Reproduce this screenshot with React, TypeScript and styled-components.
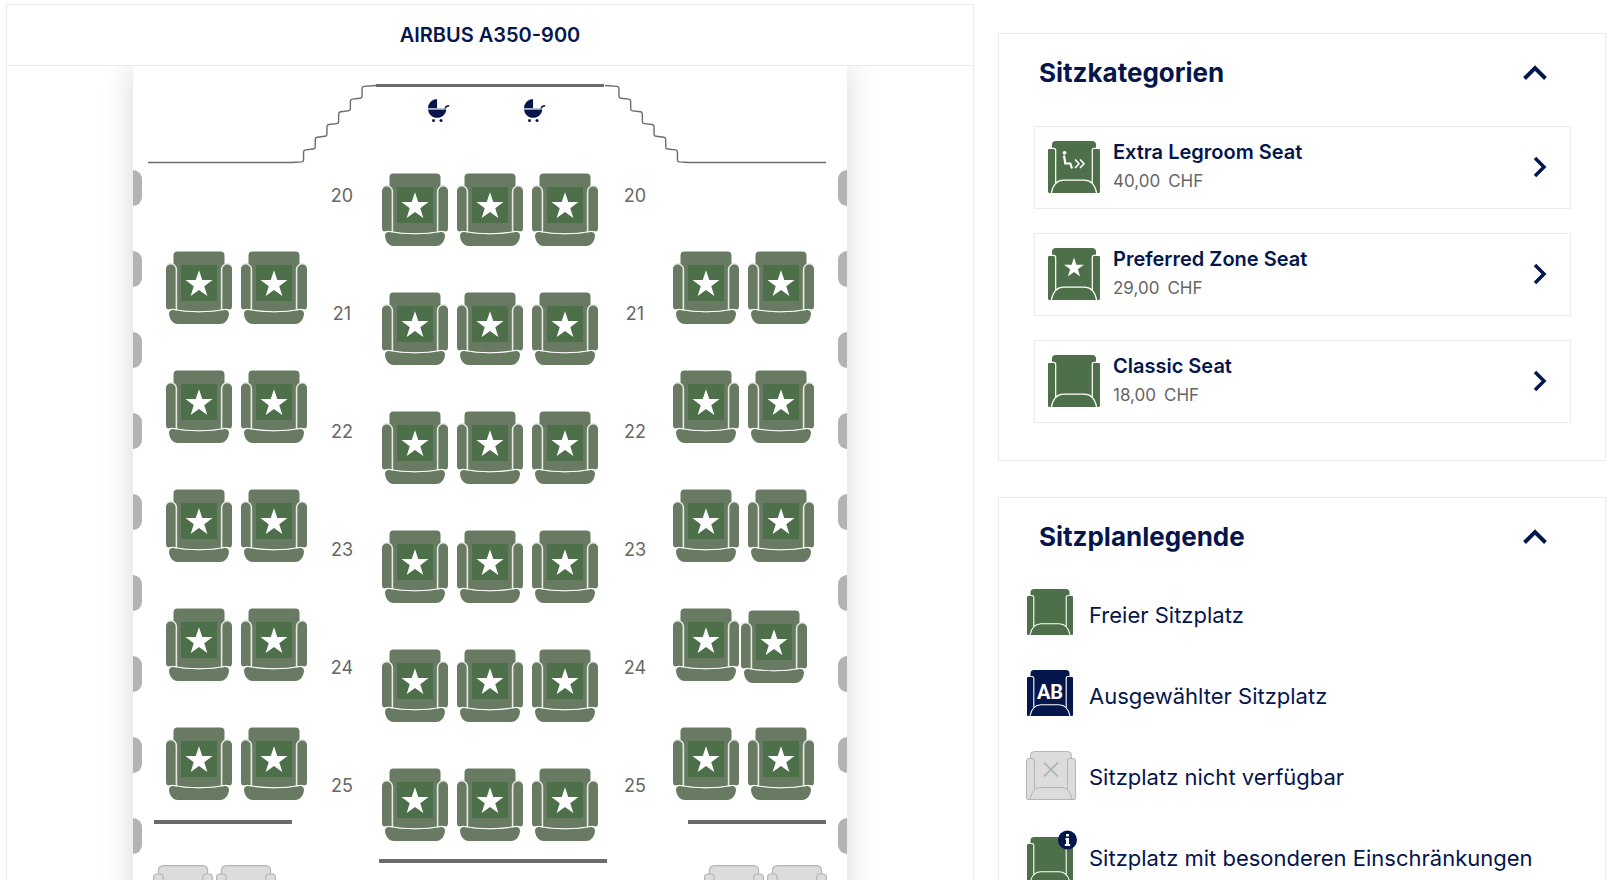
import React from "react";
import styled, { createGlobalStyle } from "styled-components";

const color = {
  navy: "#05164d",
  seat: "#687a62",
  seatCore: "#4d6f49",
  line: "#ebebeb",
  text: "#666666",
  wall: "#6b6b6b",
  window: "#b2b4b2",
  mutedFill: "#dcdcda",
  mutedLine: "#b0b8b4",
};

const GlobalStyle = createGlobalStyle`
  *, *::before, *::after { box-sizing: border-box; }
  body {
    margin: 0;
    background: #fff;
    color: ${color.navy};
    font-family: Inter, Roboto, "Liberation Sans", sans-serif;
  }
  button { font: inherit; color: inherit; border: 0; padding: 0; background: none; cursor: pointer; }
  h1, h2, p, ul { margin: 0; padding: 0; }
  svg { display: block; }
`;

const Page = styled.main`
  display: grid;
  grid-template-columns: minmax(0, 968fr) minmax(0, 608fr);
  gap: 24px;
  height: 100vh;
  padding: 4px 4px 0 6px;
  overflow: hidden;
`;

const CabinPanel = styled.section`
  border: 1px solid ${color.line};
  border-bottom: 0;
  overflow: hidden;
`;

const CabinHeader = styled.header`
  display: flex;
  align-items: center;
  justify-content: center;
  height: 61px;
  padding-bottom: 1px;
  border-bottom: 1px solid ${color.line};
`;

const AircraftName = styled.h1`
  font-size: 20px;
  line-height: 24px;
  font-weight: 600;
`;

const CabinView = styled.div`
  overflow: hidden;
  display: flex;
  justify-content: center;
`;

const Fuselage = styled.div`
  flex: none;
  width: 714px;
  background: #fff;
  box-shadow: 0 0 30px rgba(0, 0, 0, 0.16);
`;

const BulkheadArt = styled.svg`
  margin: 0 15px;
`;

const SeatGrid = styled.div`
  display: grid;
  grid-template-columns: 9px 165px 70px 230px 56px 175px 9px;
  align-items: start;
`;

const WindowStrip = styled.div<{ $side: "left" | "right" }>`
  display: grid;
  gap: 45px;
  & > span {
    height: 36px;
    background: ${color.window};
    border-radius: ${(p) => (p.$side === "left" ? "0 9px 9px 0" : "9px 0 0 9px")};
  }
`;

const SeatBlock = styled.div<{ $top: number; $left: number }>`
  display: flex;
  flex-direction: column;
  gap: 46px;
  padding: ${(p) => p.$top}px 0 0 ${(p) => p.$left}px;
`;

const SeatRow = styled.div`
  display: flex;
  gap: 9px;
  height: 73px;
`;

const SeatButton = styled.button<{ $shifted?: boolean }>`
  flex: none;
  width: 66px;
  height: 73px;
  margin: ${(p) => (p.$shifted ? "2px 0 0 -7px" : "0")};
`;

const Divider = styled.div<{ $width: number; $top: number; $left: number }>`
  width: ${(p) => p.$width}px;
  height: 4px;
  margin: ${(p) => p.$top}px 0 0 ${(p) => p.$left}px;
  background: ${color.wall};
`;

const BlockedSeats = styled.div<{ $left: number }>`
  display: flex;
  gap: 3px;
  margin: 41px 0 0 ${(p) => p.$left}px;
`;

const RowNumbers = styled.div`
  display: grid;
  grid-auto-rows: 118px;
  padding-top: 14px;
  text-align: center;
  font-size: 18px;
  line-height: 24px;
  color: ${color.text};
`;

const Sidebar = styled.aside`
  display: flex;
  flex-direction: column;
  gap: 36px;
  padding-top: 29px;
`;

const Panel = styled.section`
  flex: none;
  padding-bottom: 37px;
  border: 1px solid ${color.line};
`;

const PanelTitle = styled.h2`
  font-size: 26px;
  line-height: 32px;
  font-weight: 700;
`;

const PanelToggle = styled.button`
  display: flex;
  align-items: center;
  justify-content: space-between;
  width: 100%;
  height: 80px;
  padding: 0 58px 2px 40px;
  text-align: left;
`;

const CategoryList = styled.ul`
  display: grid;
  gap: 24px;
  margin: 12px 34px 0 35px;
  list-style: none;
`;

const CategoryButton = styled.button`
  display: flex;
  align-items: center;
  gap: 13px;
  width: 100%;
  height: 83px;
  padding: 0 23px 2px 13px;
  border: 1px solid ${color.line};
  text-align: left;
`;

const CategoryText = styled.span`
  flex: 1;
  display: flex;
  flex-direction: column;
  gap: 3px;
`;

const CategoryName = styled.span`
  font-size: 20px;
  line-height: 26px;
  font-weight: 600;
`;

const CategoryPrice = styled.span`
  display: flex;
  gap: 8px;
  font-size: 17px;
  line-height: 26px;
  color: ${color.text};
`;

const LegendList = styled.ul`
  display: grid;
  gap: 29px;
  padding: 11px 27px 0;
  list-style: none;
`;

const LegendItem = styled.li`
  display: flex;
  gap: 13px;
  height: 52px;
  font-size: 22px;
  line-height: 52px;
  white-space: nowrap;
`;

const LegendIcon = styled.svg`
  flex: none;
  overflow: visible;
`;

function starPoints(cx: number, cy: number, r: number) {
  return Array.from({ length: 10 }, (_, i) => {
    const radius = i % 2 ? r * 0.39 : r;
    const angle = (Math.PI / 5) * i - Math.PI / 2;
    return `${(cx + radius * Math.cos(angle)).toFixed(2)},${(cy + radius * Math.sin(angle)).toFixed(2)}`;
  }).join(" ");
}

function CabinSeat() {
  return (
    <svg width="66" height="73" viewBox="0 0 66 73" aria-hidden="true">
      <g fill={color.seat}>
        <path d="M11.5 .5h43a4 4 0 0 1 4 4V59H7.500V4.500a4 4 0 0 1 4-4z" />
        <path d="M9 57h48v2.500Q33 63 9 59.500z" />
      </g>
      <g fill={color.seat} stroke="#e4e9e2" strokeWidth="1.600">
        <path d="M-1 18.500a5.700 5.700 0 0 1 11.400 0V59H-1z" />
        <path d="M67 18.500a5.700 5.700 0 0 0-11.400 0V59H67z" />
      </g>
      <path d="M-2 12h3.500C.5 14 0 15.500 0 18v37c0 2 1 4 3 4.500V62h-5zM68 12h-3.500c1 2 1.500 3.500 1.500 6v37c0 2-1 4-3 4.500V62h5z" fill="#fff" />
      <path d="M3 62c0-2.500 2-3.500 4.500-3 17 3 34 3 51 0 2.500-.5 4.500.5 4.500 3 0 6-3.500 11-9 11H12c-5.500 0-9-5-9-11z" fill={color.seat} />
      <path d="M2.500 62c0-3 2-4 5-3.500 17 3 34 3 51 0 3-.5 5 .5 5 3.500" fill="none" stroke="#fff" strokeWidth="1.200" />
      <path d="M15 14h36v36H15z" fill={color.seatCore} />
      <polygon points={starPoints(33, 33.5, 14.2)} fill="#fff" />
    </svg>
  );
}

function Armchair({ fill }: { fill: string }) {
  return (
    <g fill={fill}>
      <path d="M7 0h32a3.500 3.500 0 0 1 3.500 3.500V46h-39V3.500A3.500 3.500 0 0 1 7 0z" />
      <path d="M1 7h5v39H1a1 1 0 0 1-1-1V8a1 1 0 0 1 1-1zM40 7h5a1 1 0 0 1 1 1v37a1 1 0 0 1-1 1h-5z" />
      <g fill="none" stroke="#fff" strokeWidth="1.100">
        <path d="M3.500 6.500H5a1.800 1.800 0 0 1 1.800 1.800V37.500M42.500 6.500H41a1.800 1.800 0 0 0-1.800 1.800V37.500" />
        <path d="M3 46C4.500 38.500 8 34.700 14 34.700h18c6 0 9.500 3.800 11 11.300" />
      </g>
    </g>
  );
}

function MutedArmchair({ cross }: { cross?: boolean }) {
  return (
    <g fill={color.mutedFill} stroke={color.mutedLine}>
      <path d="M8.500 .5h33a4 4 0 0 1 4 4V48.500h-41V4.500a4 4 0 0 1 4-4z" />
      <path d="M3 7.500h3a2.500 2.500 0 0 1 2.500 2.500v38.500H2a1.500 1.500 0 0 1-1.500-1.500V10A2.500 2.500 0 0 1 3 7.500zM47 7.500h-3a2.500 2.500 0 0 0-2.500 2.500v38.500H48a1.500 1.500 0 0 0 1.500-1.500V10A2.500 2.500 0 0 0 47 7.500z" />
      <path d="M4 48.500C5.500 40.500 9 36.500 15 36.500h20c6 0 9.500 4 11 12z" />
      {cross && <path d="M18 11.500 32 25.500M32 11.500 18 25.500" strokeWidth="1.800" />}
    </g>
  );
}

function Pram({ x }: { x: number }) {
  return (
    <g transform={`translate(${x} 33)`} fill={color.navy}>
      <path d="M9 0v9.200H0A9 9 0 0 1 9 0z" />
      <path d="M0 10.500h18.300c-.6 5-4.300 8.300-9.200 8.300S.6 15.500 0 10.500z" />
      <path d="M17 10.500c.3-3 1.500-3.700 4.200-3.700" fill="none" stroke={color.navy} strokeWidth="1.600" />
      <path d="M0 9.800h18" stroke="#a9afc2" strokeWidth="1" />
      <circle cx="5.500" cy="21.500" r="1.500" />
      <circle cx="13" cy="21.500" r="1.500" />
    </g>
  );
}

const stair = "l.1 -8q.1 -1.800 1.900 -2l7.800 -.9q1.900 -.2 1.900 -1.800";
const stairs = `l9.500 -.6q2 -.2 2 -2${stair.repeat(5)}l.1 -8q.1 -1.800 1.900 -2L228 19.500`;

function Bulkhead() {
  return (
    <BulkheadArt width="684" height="104" viewBox="0 0 684 104" aria-hidden="true">
      <g fill="none" stroke={color.wall} strokeWidth="1.400">
        <path d={`M0 96.500H144${stairs}`} />
        <path d={`M7 96.500H144${stairs}`} transform="translate(685 0) scale(-1 1)" />
        <path d="M228 19.500H456" strokeWidth="3" />
      </g>
      <Pram x={280} />
      <Pram x={376} />
    </BulkheadArt>
  );
}

function Chevron({ up }: { up?: boolean }) {
  return up ? (
    <svg width="24" height="16" viewBox="0 0 24 16" fill="none" stroke={color.navy} strokeWidth="4" aria-hidden="true">
      <path d="M1.500 13.500 12 3l10.500 10.500" />
    </svg>
  ) : (
    <svg width="14" height="22" viewBox="0 0 14 22" fill="none" stroke={color.navy} strokeWidth="3.500" aria-hidden="true">
      <path d="M2 2l9 9-9 9" />
    </svg>
  );
}

function Windows({ side }: { side: "left" | "right" }) {
  return (
    <WindowStrip $side={side}>
      {Array.from({ length: 9 }, (_, i) => (
        <span key={i} />
      ))}
    </WindowStrip>
  );
}

function Seats({ rows, letters, shifted }: { rows: number[]; letters: string; shifted?: string }) {
  return (
    <>
      {rows.map((row) => (
        <SeatRow key={row}>
          {letters.split("").map((letter) => (
            <SeatButton key={letter} type="button" aria-label={`${row}${letter}`} $shifted={shifted === `${row}${letter}`}>
              <CabinSeat />
            </SeatButton>
          ))}
        </SeatRow>
      ))}
    </>
  );
}

function Blocked({ left }: { left: number }) {
  return (
    <BlockedSeats $left={left}>
      {[0, 1].map((i) => (
        <svg key={i} width="60" height="60" viewBox="0 0 50 50" aria-hidden="true">
          <MutedArmchair />
        </svg>
      ))}
    </BlockedSeats>
  );
}

const rows = [20, 21, 22, 23, 24, 25];
const sideRows = rows.slice(1);

function Numbers() {
  return (
    <RowNumbers>
      {rows.map((row) => (
        <span key={row}>{row}</span>
      ))}
    </RowNumbers>
  );
}

const SeatColumn = styled.div`
  min-width: 0;
`;

const categories = [
  { name: "Extra Legroom Seat", price: "40,00", mark: "legroom" },
  { name: "Preferred Zone Seat", price: "29,00", mark: "star" },
  { name: "Classic Seat", price: "18,00", mark: "none" },
];

function CategoryIcon({ mark }: { mark: string }) {
  return (
    <svg width="52" height="52" viewBox="0 0 52 52" aria-hidden="true">
      <g transform="scale(1.130)">
        <Armchair fill={color.seatCore} />
      </g>
      {mark === "star" && <polygon points={starPoints(26, 20, 10.4)} fill="#fff" />}
      {mark === "legroom" && (
        <g fill="none" stroke="#fff" strokeWidth="1.600">
          <circle cx="16.500" cy="11.800" r="1.900" fill="#fff" stroke="none" />
          <path d="M16 14.500l1.300 8h5l1.700 5" strokeWidth="2.200" />
          <path d="M27 18.500l4 4.200-4 4.300M32 18.500l4 4.200-4 4.300" />
        </g>
      )}
    </svg>
  );
}

function PanelHeading({ children }: { children: React.ReactNode }) {
  return (
    <PanelTitle>
      <PanelToggle type="button" aria-expanded="true">
        {children}
        <Chevron up />
      </PanelToggle>
    </PanelTitle>
  );
}

export default function App() {
  return (
    <>
      <GlobalStyle />
      <Page>
        <CabinPanel>
          <CabinHeader>
            <AircraftName>AIRBUS A350-900</AircraftName>
          </CabinHeader>
          <CabinView>
            <Fuselage>
              <Bulkhead />
              <SeatGrid>
                <Windows side="left" />
                <SeatColumn>
                  <SeatBlock $top={81} $left={24}>
                    <Seats rows={sideRows} letters="AC" />
                  </SeatBlock>
                  <Divider $width={138} $top={20} $left={12} />
                  <Blocked left={11} />
                </SeatColumn>
                <Numbers />
                <SeatColumn>
                  <SeatBlock $top={3} $left={5}>
                    <Seats rows={rows} letters="DEG" />
                  </SeatBlock>
                  <Divider $width={228} $top={18} $left={2} />
                </SeatColumn>
                <Numbers />
                <SeatColumn>
                  <SeatBlock $top={81} $left={10}>
                    <Seats rows={sideRows} letters="HK" shifted="24K" />
                  </SeatBlock>
                  <Divider $width={138} $top={20} $left={25} />
                  <Blocked left={41} />
                </SeatColumn>
                <Windows side="right" />
              </SeatGrid>
            </Fuselage>
          </CabinView>
        </CabinPanel>

        <Sidebar>
          <Panel>
            <PanelHeading>Sitzkategorien</PanelHeading>
            <CategoryList>
              {categories.map((c) => (
                <li key={c.name}>
                  <CategoryButton type="button">
                    <CategoryIcon mark={c.mark} />
                    <CategoryText>
                      <CategoryName>{c.name}</CategoryName>
                      <CategoryPrice>
                        <span>{c.price}</span>
                        <span>CHF</span>
                      </CategoryPrice>
                    </CategoryText>
                    <Chevron />
                  </CategoryButton>
                </li>
              ))}
            </CategoryList>
          </Panel>

          <Panel>
            <PanelHeading>Sitzplanlegende</PanelHeading>
            <LegendList>
              <LegendItem>
                <LegendIcon width="50" height="50" viewBox="-1 0 50 50" aria-hidden="true">
                  <Armchair fill={color.seatCore} />
                </LegendIcon>
                Freier Sitzplatz
              </LegendItem>
              <LegendItem>
                <LegendIcon width="50" height="50" viewBox="-1 0 50 50" aria-hidden="true">
                  <Armchair fill={color.navy} />
                  <text x="23" y="29" textAnchor="middle" fill="#fff" fontFamily="Roboto, sans-serif" fontSize="20" fontWeight="700">
                    AB
                  </text>
                </LegendIcon>
                Ausgewählter Sitzplatz
              </LegendItem>
              <LegendItem>
                <LegendIcon width="50" height="50" viewBox="0 0 50 50" aria-hidden="true">
                  <MutedArmchair cross />
                </LegendIcon>
                Sitzplatz nicht verfügbar
              </LegendItem>
              <LegendItem>
                <LegendIcon width="50" height="50" viewBox="-1 -5 50 50" aria-hidden="true">
                  <Armchair fill={color.seatCore} />
                  <circle cx="40.500" cy="3" r="9.500" fill={color.navy} />
                  <path d="M39 -3h3v2.500h-3zM38.500 1H42v6h1.200v2h-5.400V7H39V3h-.5z" fill="#fff" />
                </LegendIcon>
                Sitzplatz mit besonderen Einschränkungen
              </LegendItem>
            </LegendList>
          </Panel>
        </Sidebar>
      </Page>
    </>
  );
}
